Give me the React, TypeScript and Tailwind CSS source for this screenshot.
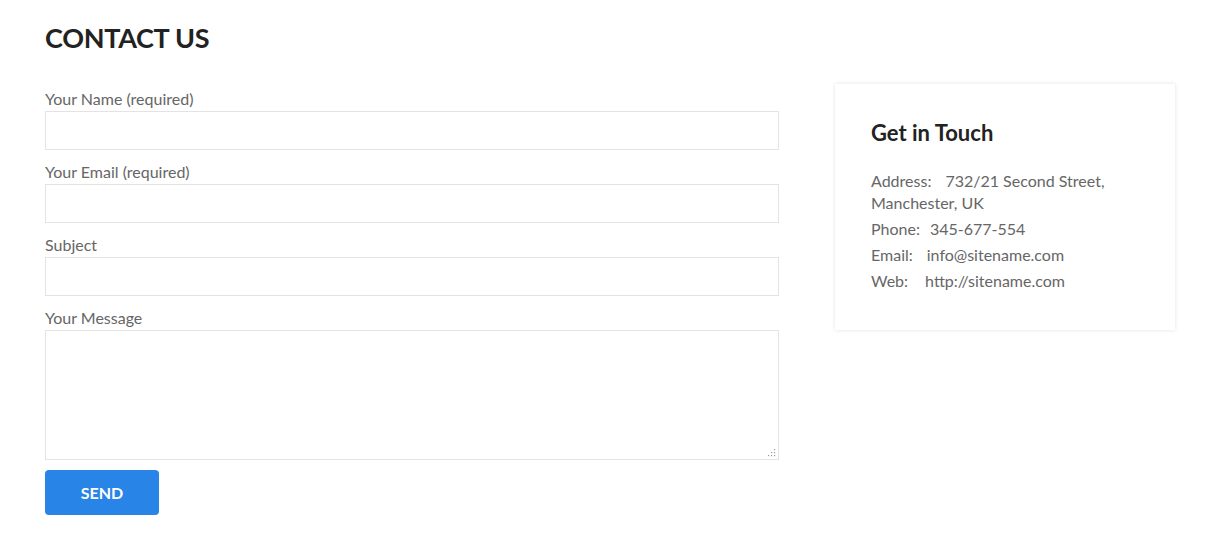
import React from 'react';

const fields = [
  { label: 'Your Name (required)', type: 'text' },
  { label: 'Your Email (required)', type: 'email' },
  { label: 'Subject', type: 'text' },
];

const info = [
  { k: 'Address:', v: '732/21 Second Street, Manchester, UK', gap: 'mr-[14px]' },
  { k: 'Phone:', v: '345-677-554', gap: 'mr-[10px]' },
  { k: 'Email:', v: 'info@sitename.com', gap: 'mr-[14px]' },
  { k: 'Web:', v: 'http://sitename.com', gap: 'mr-[17px]' },
];

function Grip() {
  // dotted resize grip in the textarea corner
  const dots = [
    [7, 1],
    [7, 4],
    [4, 4],
    [7, 7],
    [4, 7],
    [1, 7],
  ];
  return (
    <svg width="9" height="9" viewBox="0 0 9 9" className="pointer-events-none absolute bottom-[3px] right-[3px]">
      {dots.map(([x, y]) => (
        <rect key={`${x}-${y}`} x={x} y={y} width="1.2" height="1.2" fill="#9a9a9a" />
      ))}
    </svg>
  );
}

export default function App() {
  return (
    <div
      className="min-h-screen bg-white pl-[45px] pr-[53px] pt-[21px]"
      style={{ fontFamily: 'Lato, "Open Sans", sans-serif' }}
    >
      <h1 className="text-[27px] font-bold leading-[34px] tracking-[-0.3px] text-[#222]">CONTACT US</h1>

      <div className="mt-[33px] flex justify-between">
        {/* form */}
        <form className="w-[734px]" onSubmit={(e) => e.preventDefault()}>
          {fields.map((f) => (
            <div key={f.label} className="mb-[11px]">
              <label className="block text-[16px] leading-[22px] text-[#666]">{f.label}</label>
              <input
                type={f.type}
                className="mt-[1px] block h-[39px] w-full border border-[#e3e3e3] bg-white px-3 outline-none"
              />
            </div>
          ))}
          <div>
            <label className="block text-[16px] leading-[22px] text-[#666]">Your Message</label>
            <div className="relative mt-[1px]">
              <textarea className="block h-[130px] w-full resize-none border border-[#e3e3e3] bg-white px-3 py-2 outline-none" />
              <Grip />
            </div>
          </div>
          <button
            type="submit"
            className="mt-[10px] h-[45px] w-[114px] rounded-[4px] bg-[#2884e6] text-[16px] font-bold text-white"
          >
            SEND
          </button>
        </form>

        {/* card */}
        <div className="mt-[-4px] h-[246px] w-[340px] bg-white px-[36px] pt-[34px] shadow-[0_0_4px_rgba(0,0,0,0.12)]">
          <h2 className="text-[22px] font-bold leading-[30px] text-[#222]">Get in Touch</h2>
          <div className="mt-[22px]">
            {info.map((i) => (
              <p key={i.k} className="mb-[4px] text-[16px] leading-[22px] text-[#666]">
                <span className={i.gap}>{i.k}</span>
                {i.v}
              </p>
            ))}
          </div>
        </div>
      </div>
    </div>
  );
}
